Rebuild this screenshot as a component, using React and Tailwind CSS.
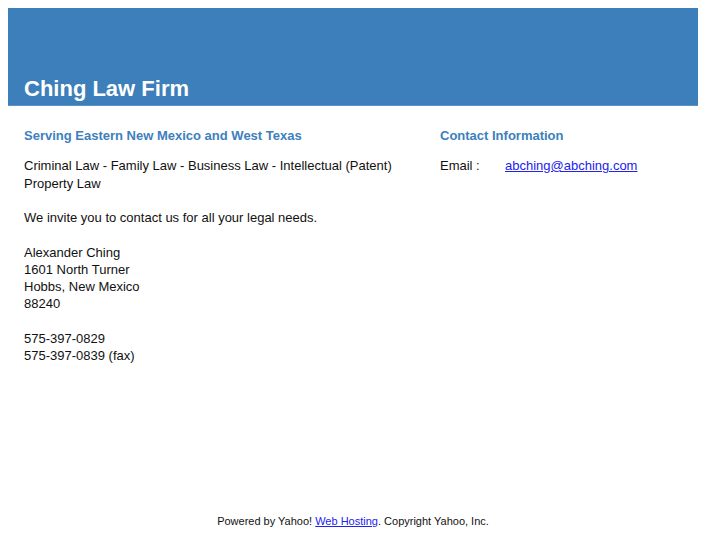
import React from "react";

export default function App() {
    return (
        <div className="min-h-[545px] bg-white text-[13px] text-[#111] flex flex-col" style={{ fontFamily: '"Liberation Sans", Arial, sans-serif' }}>
            <div className="mx-2 mt-2 w-[690px] h-[98px] bg-[#3c7fba] border-b border-[#5a93c6] flex items-end px-4 pb-[2px]">
                <h1 className="text-[22px] leading-[28px] font-bold text-white">Ching Law Firm</h1>
            </div>

            <div className="mx-2 w-[690px] flex px-4 pt-[21px]">
                {/* left column */}
                <div className="w-[400px] leading-[17px]">
                    <h2 className="font-bold text-[#3d80bd] leading-[17px] mb-[13px]">Serving Eastern New Mexico and West Texas</h2>
                    <p className="w-[380px] leading-[18px]">Criminal Law - Family Law - Business Law - Intellectual (Patent) Property Law</p>
                    <p className="mt-[16px]">We invite you to contact us for all your legal needs.</p>
                    <p className="mt-[18px]">
                        Alexander Ching<br />
                        1601 North Turner<br />
                        Hobbs, New Mexico<br />
                        88240
                    </p>
                    <p className="mt-[18px]">
                        575-397-0829<br />
                        575-397-0839 (fax)
                    </p>
                </div>

                {/* right column */}
                <div className="ml-4 leading-[17px]">
                    <h2 className="font-bold text-[#3d80bd] leading-[17px] mb-[13px]">Contact Information</h2>
                    <div className="flex">
                        <span className="w-[65px]">Email :</span>
                        <a href="#" className="text-[#2222ee] underline">abching@abching.com</a>
                    </div>
                </div>
            </div>

            <div className="mt-auto mx-2 w-[690px] text-center text-[11px] leading-[14px] pb-[17px]">
                Powered by Yahoo! <a href="#" className="text-[#2222ee] underline">Web Hosting</a>. Copyright Yahoo, Inc.
            </div>
        </div>
    );
}
